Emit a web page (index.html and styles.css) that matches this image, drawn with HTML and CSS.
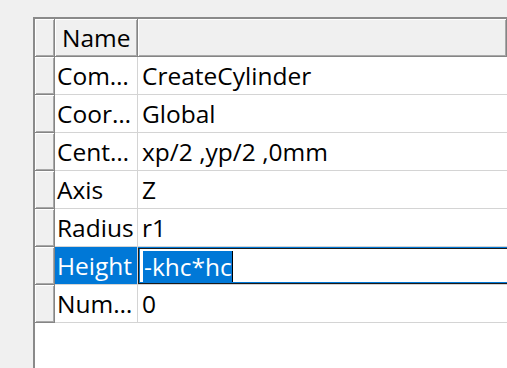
FILE: index.html
```html
<!DOCTYPE html>
<html lang="en">
<head>
    <meta charset="UTF-8">
    <meta name="viewport" content="width=device-width, initial-scale=1.0">
    <title>Properties</title>
    <link rel="stylesheet" href="styles.css">
</head>
<body>
    <div class="table">
        <!-- header row -->
        <div class="section corner"></div>
        <div class="section head">Name</div>
        <div class="section head"></div>

        <div class="section"></div>
        <div class="cell name">Com…</div>
        <div class="cell value">CreateCylinder</div>

        <div class="section"></div>
        <div class="cell name">Coor…</div>
        <div class="cell value">Global</div>

        <div class="section"></div>
        <div class="cell name">Cent…</div>
        <div class="cell value">xp/2 ,yp/2 ,0mm</div>

        <div class="section"></div>
        <div class="cell name">Axis</div>
        <div class="cell value">Z</div>

        <div class="section"></div>
        <div class="cell name">Radius</div>
        <div class="cell value">r1</div>

        <div class="section"></div>
        <div class="cell name selected">Height</div>
        <div class="cell value editing">
            <div class="editor"><span class="sel">-khc*hc</span><span class="caret"></span></div>
        </div>

        <div class="section"></div>
        <div class="cell name">Num…</div>
        <div class="cell value">0</div>
    </div>
</body>
</html>
```

FILE: styles.css
```css
html, body {
    margin: 0;
    height: 100%;
    overflow: hidden;
}
body {
    background: #f0f0f0;
    font-family: 'Open Sans', 'Noto Sans', sans-serif;
    font-size: 24.5px;
    color: #000;
    padding: 17px 0 0 33px;
    box-sizing: border-box;
}
.table {
    width: 474px;
    height: 351px;
    box-sizing: border-box;
    background: white;
    border-style: solid;
    border-width: 2px 0 0 2px;
    border-color: #8a8a8a;
    display: grid;
    grid-template-columns: 20px 83px 1fr;
    grid-auto-rows: 38px;
    align-content: start;
    overflow: hidden;
}
.section {
    background: #f0f0f0;
    border-right: 1px solid #858585;
    border-bottom: 1px solid #858585;
    box-shadow: inset 1px 1px #ffffff, inset -1px -1px #a8a8a8;
}
.head {
    display: flex;
    align-items: center;
    padding-left: 7px;
    padding-bottom: 1px;
}
.cell {
    display: flex;
    align-items: center;
    border-right: 1px solid #d4d4d4;
    border-bottom: 1px solid #d4d4d4;
    padding-left: 2px;
    white-space: nowrap;
    overflow: hidden;
}
.value {
    padding-left: 4px;
    border-right: none;
}
.selected {
    background: #0078d7;
    color: white;
}
.editing {
    background: #0078d7;
    padding: 1px 0 0 0;
    align-items: stretch;
}
.editor {
    flex: 1;
    display: flex;
    align-items: center;
    background: white;
    border: 1px solid #1a1a1a;
    border-right: none;
    box-shadow: inset 1px 0 #0078d7, inset 0 -1px #0078d7;
    padding-left: 4px;
}
.sel {
    background: #0078d7;
    color: white;
    line-height: 31px;
    padding-left: 1px;
}
.caret {
    width: 1px;
    height: 31px;
    background: #000;
}
```
